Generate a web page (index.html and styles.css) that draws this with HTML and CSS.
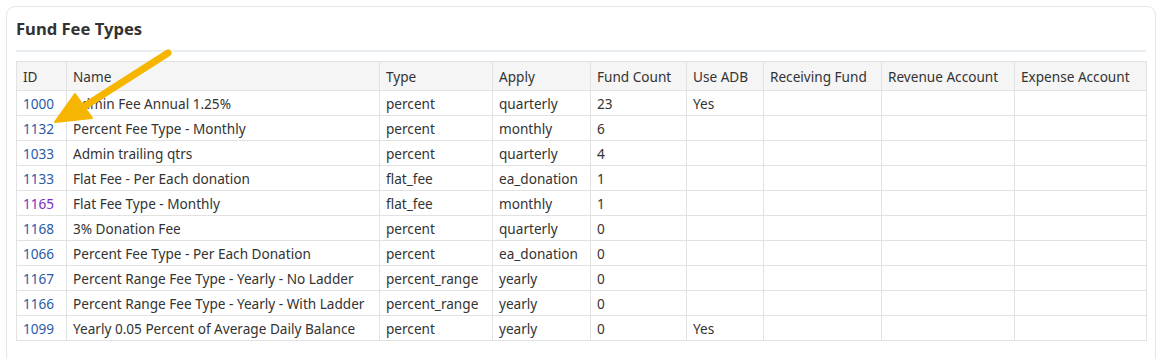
FILE: index.html
```html
<!DOCTYPE html>
<html>
<head>
<meta charset="utf-8">
<link rel="stylesheet" href="styles.css">
</head>
<body>
<div class="card">
  <h2 class="title">Fund Fee Types</h2>
  <table class="grid">
    <colgroup>
      <col class="c-id"><col class="c-name"><col class="c-type"><col class="c-apply"><col class="c-count"><col class="c-adb"><col class="c-recv"><col class="c-rev"><col class="c-exp">
    </colgroup>
    <thead>
      <tr><th>ID</th><th>Name</th><th>Type</th><th>Apply</th><th>Fund Count</th><th>Use ADB</th><th>Receiving Fund</th><th>Revenue Account</th><th>Expense Account</th></tr>
    </thead>
    <tbody>
      <tr><td><a href="#">1000</a></td><td>Admin Fee Annual 1.25%</td><td>percent</td><td>quarterly</td><td>23</td><td>Yes</td><td></td><td></td><td></td></tr>
      <tr><td><a href="#">1132</a></td><td>Percent Fee Type - Monthly</td><td>percent</td><td>monthly</td><td>6</td><td></td><td></td><td></td><td></td></tr>
      <tr><td><a href="#">1033</a></td><td>Admin trailing qtrs</td><td>percent</td><td>quarterly</td><td>4</td><td></td><td></td><td></td><td></td></tr>
      <tr><td><a href="#">1133</a></td><td>Flat Fee - Per Each donation</td><td>flat_fee</td><td>ea_donation</td><td>1</td><td></td><td></td><td></td><td></td></tr>
      <tr><td><a href="#" class="visited">1165</a></td><td>Flat Fee Type - Monthly</td><td>flat_fee</td><td>monthly</td><td>1</td><td></td><td></td><td></td><td></td></tr>
      <tr><td><a href="#">1168</a></td><td>3% Donation Fee</td><td>percent</td><td>quarterly</td><td>0</td><td></td><td></td><td></td><td></td></tr>
      <tr><td><a href="#">1066</a></td><td>Percent Fee Type - Per Each Donation</td><td>percent</td><td>ea_donation</td><td>0</td><td></td><td></td><td></td><td></td></tr>
      <tr><td><a href="#">1167</a></td><td>Percent Range Fee Type - Yearly - No Ladder</td><td>percent_range</td><td>yearly</td><td>0</td><td></td><td></td><td></td><td></td></tr>
      <tr><td><a href="#">1166</a></td><td>Percent Range Fee Type - Yearly - With Ladder</td><td>percent_range</td><td>yearly</td><td>0</td><td></td><td></td><td></td><td></td></tr>
      <tr><td><a href="#">1099</a></td><td>Yearly 0.05 Percent of Average Daily Balance</td><td>percent</td><td>yearly</td><td>0</td><td>Yes</td><td></td><td></td><td></td></tr>
    </tbody>
  </table>
</div>
<svg class="arrow" width="140" height="90" viewBox="0 0 140 90">
  <line x1="123" y1="8" x2="40" y2="61" stroke="#f6b500" stroke-width="7" stroke-linecap="round"/>
  <polygon points="10,77 30,49 47,73" fill="#f6b500" stroke="#f6b500" stroke-width="2" stroke-linejoin="round"/>
</svg>
</body>
</html>
```
FILE: styles.css
```css
html, body {
  margin: 0;
  padding: 0;
  background: #fff;
}
body {
  padding: 6px;
  font-family: "Noto Sans", "Open Sans", sans-serif;
  color: #333;
  position: relative;
}
.card {
  width: 1150px;
  box-sizing: border-box;
  border: 1px solid #e1e6ec;
  border-radius: 9px;
  padding: 0 9px 16px 9px;
  height: 360px;
}
.title {
  margin: 0;
  font-size: 16.6px;
  font-weight: 700;
  color: #333;
  line-height: 24px;
  padding: 10px 0 9px 0;
  border-bottom: 2px solid #e8edf2;
  margin-bottom: 9px;
}
.grid {
  border-collapse: collapse;
  width: 1131px;
  table-layout: fixed;
  font-size: 13.6px;
}
.grid th, .grid td {
  border: 1px solid #e2e2e2;
  padding: 0 6px;
  text-align: left;
  white-space: nowrap;
  overflow: hidden;
}
.grid th {
  background: #f5f5f5;
  font-weight: 400;
  height: 28px;
}
.grid td {
  height: 24px;
}
.grid a {
  color: #2a5ba8;
  text-decoration: none;
}
.grid a.visited {
  color: #7c2fbf;
}
.c-id { width: 50px; }
.c-name { width: 313px; }
.c-type { width: 113px; }
.c-apply { width: 98px; }
.c-count { width: 96px; }
.c-adb { width: 77px; }
.c-recv { width: 118px; }
.c-rev { width: 133px; }
.c-exp { width: 132px; }
.arrow {
  position: absolute;
  left: 45px;
  top: 45px;
}
```
